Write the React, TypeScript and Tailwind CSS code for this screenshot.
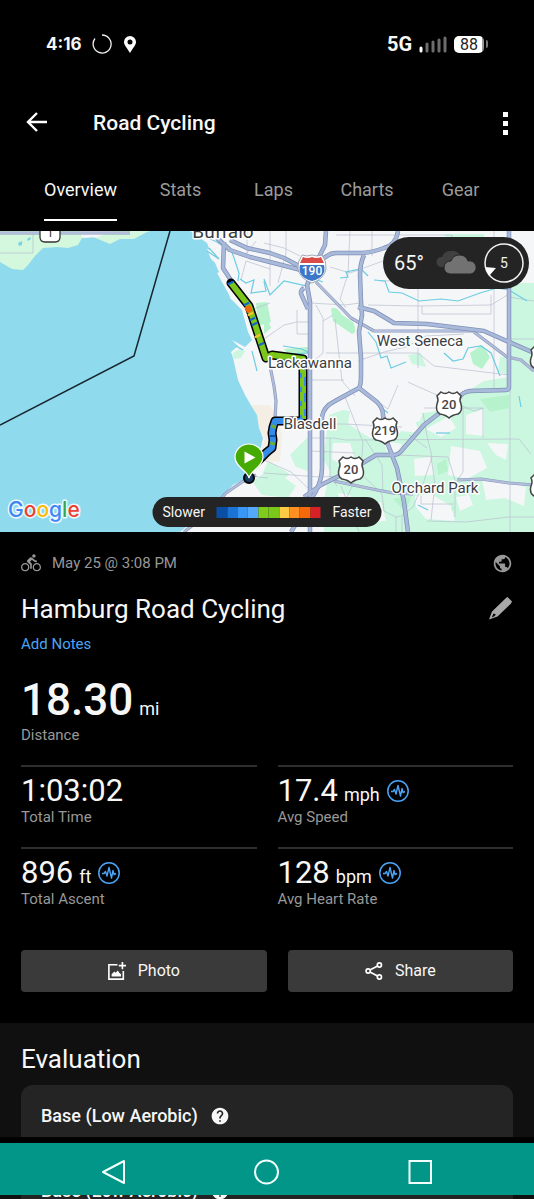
import React from "react";
import { MdDirectionsBike, MdPublic, MdHelp } from "react-icons/md";

const HIGHWAYS = [
  "M326 0 325 14 319 26 307 54 310 71V301",
  "M304 57Q299 60 302 65L308 78",
  "M217 7 230 19 250 26 270 31 301 39",
  "M230 9 247 17 270 22 284 27 301 36",
  "M224 11 223 37 232 51",
  "M319 30 327 25Q331 22 336 22H362Q374 21 384 17 396 14 398 0",
  "M364 24Q360 33 360 44L361 71 362 84 359 101 361 127V144Q361 154 359 157L335 170Q323 176 322 186V237Q322 248 316 260L291 301",
  "M359 157 377 171Q383 177 383 184L387 211 397 237 404 271 408 301",
  "M509 0V156Q509 159 506 159L470 160Q462 161 459 167L424 194 403 218Q399 224 393 224H376L351 239 321 254 304 266",
  "M358 76 374 80 394 92 427 93 484 100 534 122",
];

const SECONDARY = [
  "M0 2H130",
  "M270 135 274 155 276 170 275 188",
  "M256 244 242 251 226 262 207 283 184 301",
  "M316 51 351 87 374 100H477",
  "M474 101 507 126 521 129 534 140",
  "M334 250 377 259 393 262 413 263",
  "M457 249 481 248 509 252 534 254",
];

const STREETS = [
  "M0 22H33V2", "M247 0V24", "M241 49 246 30 270 38", "M270 0V55", "M256 10 247 22",
  "M286 0V22L278 52", "M264 12 284 17 300 25", "M350 0 348 43 340 68 346 77", "M372 0V25",
  "M336 4H452V43L421 57", "M418 54V137", "M368 74 418 75 491 74 509 63", "M422 75V83H491V64",
  "M330 36 350 42 394 26 452 24 509 16", "M310 72 345 74 360 72", "M297 79V103H308",
  "M264 108 284 94 297 91H310", "M316 74 323 87V122L310 133", "M323 90 333 84", "M326 122H418L434 135 509 144",
  "M358 130 384 121 406 116 426 105 464 103", "M335 88 338 115 342 150 355 165",
  "M310 149H344", "M345 166 363 211 361 237 347 266", "M398 154 388 178 378 171", "M408 151 421 157 474 180 483 177",
  "M494 0V159", "M510 0V301", "M310 207H333L346 209 519 208 531 223", "M330 207V245L337 255",
  "M355 237 382 263 384 280 396 286 401 285 413 276 424 250 432 226 427 205 423 182",
  "M365 208 382 234 383 260", "M397 224 448 226 455 249V286", "M421 265V273H454", "M431 226 435 253 431 289",
  "M463 177V241L456 251", "M483 177V207", "M424 177H483", "M427 290 466 291 509 286H534",
  "M396 286V301", "M402 285V301", "M310 193H345L402 196", "M264 229 291 241 310 259", "M264 242 320 246 344 245",
  "M341 255 348 272 359 301", "M509 108H534", "M509 66 534 70", "M380 50 452 48 509 40",
  "M310 220 355 222", "M409 204 427 217", "M251 79 270 72", "M250 245 268 247",
];

const CREEKS = [
  "M208 7C222 12 223 16 232 21L239 42 238 50", "M240 48 246 52 254 49 251 62 266 60 264 50",
  "M207 20 219 28 209 17", "M252 120 257 140", "M236 115 243 119",
  "M264 48 270 64 284 50 307 55 314 48 323 51", "M340 47 348 46 346 41 361 38 368 45",
  "M374 49 385 50 389 61 402 62 419 70 441 68 458 70 480 62 497 57 509 59 527 70",
  "M368 101 376 111 381 127 387 125 391 137 406 131", "M444 122 453 130 463 128 468 117 481 115 491 122 500 145",
  "M283 115 302 118 309 122 285 123", "M383 178 388 182", "M436 202H450", "M519 165 521 176", "M418 274 428 279",
];

function Shield({ x, y, label }: { x: number; y: number; label: string }) {
  return (
    <g transform={`translate(${x} ${y})`}>
      <path
        d="M-8-12Q-4-9 0-12 4-9 8-12L12-8Q10-4 12 0 14 7 9 10 3 11 0 14-3 11-9 10-14 7-12 0-10-4-12-8Z"
        fill="#fff"
        stroke="#444"
        strokeWidth="1.5"
      />
      <text y="5" textAnchor="middle" fontSize="13" fontWeight="500" fill="#444">
        {label}
      </text>
    </g>
  );
}

const PLACES = [
  { x: 223, y: 7, size: 19, name: "Buffalo" },
  { x: 310, y: 137, size: 15, name: "Lackawanna" },
  { x: 420, y: 115, size: 15, name: "West Seneca" },
  { x: 310, y: 198, size: 15, name: "Blasdell" },
  { x: 435, y: 262, size: 15, name: "Orchard Park" },
];

const ROUTE_NORTH = "M231 52 249 75 266 127 272 124 303 128V188";
const ROUTE_SOUTH = "M303 188 300 190 275 190 273 196 272 202 273 209 272 217 267 221 262 226 253 235";

function RouteMap() {
  return (
    <svg
      viewBox="0 0 534 301"
      preserveAspectRatio="xMidYMid slice"
      className="block h-[301px] w-full font-['Roboto',sans-serif]"
      role="img"
      aria-label="Route map"
    >
      <rect width="534" height="301" fill="#f5f6f8" />
      <g fill="#cbf7e0">
        <path d="M508 52H534V301H324V268L330 240 323 228 329 184 343 179 350 180 348 193 370 207 396 207 401 200 420 202 410 178 424 182 436 180 460 165 484 150 509 146Z" />
        <path d="M443 3H485L480 10H450ZM408 124 421 122 426 136 412 133ZM500 126H509V145L498 140Z" />
        <path d="M268 230 290 243 285 247 296 255 288 267 262 264 252 250 262 244ZM290 224 308 206V240L296 236Z" />
      </g>
      <g fill="#b6f2cb">
        <path d="M331 78Q336 74 342 84L353 91Q358 102 352 103L333 90ZM470 122 482 114 490 126 482 138 473 133ZM264 77 271 97 264 103ZM256 72 267 71 271 91 258 95ZM284 118 308 116V122L292 128Z" />
        <path d="M480 168 509 164V177L490 181ZM437 233 446 228 448 240 438 244ZM424 280 455 276 448 288 431 287ZM393 268 411 265 406 281Z" />
      </g>
      <g fill="#f5f6f8">
        <path d="M397 178 424 178 420 190 396 197ZM426 198 449 185 456 197 441 206ZM333 212 350 212 354 225 343 235 332 228ZM383 210 402 213 397 223 387 221ZM451 215 480 220 487 237 467 248 448 244ZM414 228 431 226 434 244 415 245ZM482 248 509 252 526 256 524 275 505 267 486 269ZM415 265 431 263 451 275 455 290 426 288 416 276ZM338 262 350 264 355 278 344 285ZM363 276 381 271 386 290 365 291ZM466 184 484 178 484 205 466 203ZM456 266 469 264 473 274 460 280ZM487 212 508 213 506 229 496 224Z" />
      </g>
      <path d="M251 174H269L277 184 282 205 280 230 268 232 260 224 265 207 259 197Z" fill="#f5eee4" />
      <path
        d="M0 0H190L207 12 218 39 228 54 230 67 242 79 248 101 252 109 245 116 232 109 238 115 231 121 233 127 238 149 245 164 252 176 257 184 259 197 263 207 261 216 256 235 243 249 233 254 223 264 200 284 180 301H0Z"
        fill="#90daed"
      />
      <path
        d="M0 0V31L12 38 23 39 28 34 35 25 43 17 57 16 68 17 78 14 82 7 93 6 110 13 120 8 134 8 145 2 150 0Z"
        fill="#d3f8de"
      />
      <path d="M80 0H112L98 6 82 7Z" fill="#f5f6f8" />
      <path d="M232 123 239 118 245 120 241 127 234 128Z" fill="#cdf6e1" />
      <path d="M207 18 217 21 226 35 220 36 211 28ZM217 42 222 40 230 50 236 68 232 69Z" fill="#f5f6f8" />
      <path d="M18 12 22 10 22 14 19 15ZM27 8 30 6 31 8 28 10Z" fill="#79d3e8" />
      <g fill="none" stroke="#b9bfd0" strokeOpacity=".7">
        {STREETS.map((d) => (
          <path key={d} d={d} />
        ))}
      </g>
      <g fill="none" stroke="#6ccce2" strokeWidth="1.2">
        {CREEKS.map((d) => (
          <path key={d} d={d} />
        ))}
      </g>
      <g fill="none" strokeLinejoin="round">
        {SECONDARY.map((d) => (
          <path key={d} d={d} stroke="#8c9abc" strokeWidth="3.2" />
        ))}
        {SECONDARY.map((d) => (
          <path key={d + "i"} d={d} stroke="#b2bedb" strokeWidth="1.8" />
        ))}
        {HIGHWAYS.map((d) => (
          <path key={d} d={d} stroke="#7f90b8" strokeWidth="4.5" />
        ))}
        {HIGHWAYS.map((d) => (
          <path key={d + "i"} d={d} stroke="#a9b9da" strokeWidth="3" />
        ))}
      </g>
      <path d="M170 0 134 125 0 194" fill="none" stroke="#17252f" strokeWidth="1.5" />

      <g fill="none" strokeLinejoin="round">
        <circle cx="249" cy="247" r="5" fill="#173c66" stroke="#000" strokeWidth="2" />
        <path d={ROUTE_NORTH} stroke="#000" strokeWidth="9" strokeLinecap="round" />
        <path d={ROUTE_SOUTH} stroke="#000" strokeWidth="9" />
        <path d={ROUTE_NORTH} stroke="#7bc51c" strokeWidth="6" />
        <path d={ROUTE_SOUTH} stroke="#348ce8" strokeWidth="6" />
        <path d="M305 130V185" stroke="#348ce8" strokeWidth="2" strokeDasharray="9 7" />
        <path d="M301 142V188" stroke="#348ce8" strokeWidth="2" strokeDasharray="5 9" />
        <path d="M247 75 250 81" stroke="#f26a0c" strokeWidth="6" />
        <path d="M250 82 251 84M257 104 258 106" stroke="#fcc133" strokeWidth="6" />
        <path d="M246 72 247 74M252 87 253 89M254 92 255 94M261 112 262 114M230 51 231 53" stroke="#1668c4" strokeWidth="6" />
        <path d="M274 194 273 197M273 211 272 214" stroke="#6bae35" strokeWidth="5" />
        <path d="M272 204V206" stroke="#0d529f" strokeWidth="6" />
      </g>

      <g transform="translate(312 37)">
        <path
          d="M-10-13Q-5-11 0-13 5-11 10-13 15-6 14 1 12 11 0 15-12 11-14 1-15-6-10-13Z"
          fill="#fff"
          stroke="#8b93a5"
          strokeWidth=".8"
        />
        <path d="M-9-11Q-5-9 0-11 5-9 9-11L12-5H-12Z" fill="#d94b46" />
        <path d="M-12-3H12Q15 9 0 13-15 9-12-3Z" fill="#3b78c8" />
        <text y="7" textAnchor="middle" fontSize="12" fontWeight="500" fill="#fff">190</text>
      </g>
      <Shield x={449} y={173} label="20" />
      <Shield x={385} y={199} label="219" />
      <Shield x={351} y={238} label="20" />
      <Shield x={543} y={127} label="" />
      <Shield x={543} y={255} label="" />
      <g>
        <path d="M40-6H60V6Q60 11 55 11H45Q40 11 40 6Z" fill="#fff" stroke="#333" strokeWidth="1.3" />
        <text x="50" y="6" textAnchor="middle" fontSize="12" fill="#333">1</text>
      </g>
      {PLACES.map((p) => (
        <text
          key={p.name}
          x={p.x}
          y={p.y}
          textAnchor="middle"
          fontSize={p.size}
          fill="#3a3d42"
          stroke="#fff"
          strokeWidth="3"
          strokeLinejoin="round"
          paintOrder="stroke"
        >
          {p.name}
        </text>
      ))}

      <path d="M249 247C247 239 235 236 235 226A14 13 0 0 1 263 226C263 236 251 239 249 247Z" fill="#45ab03" stroke="#fff" strokeWidth="1.2" />
      <path d="M244.500 220.500 255.500 226.500 244.500 232.500Z" fill="#fff" />

      <text x="8" y="286" fontFamily="Inter" fontSize="21" fontWeight="500" stroke="#fff" strokeOpacity=".85" strokeWidth="3" strokeLinejoin="round" paintOrder="stroke">
        <tspan fill="#4285f4">G</tspan>
        <tspan fill="#ea4335">o</tspan>
        <tspan fill="#fbbc05">o</tspan>
        <tspan fill="#4285f4">g</tspan>
        <tspan fill="#34a853">l</tspan>
        <tspan fill="#ea4335">e</tspan>
      </text>
    </svg>
  );
}

function PulseIcon() {
  return (
    <svg viewBox="0 0 24 24" className="size-6 self-center" fill="none" stroke="#4ba3f5" aria-hidden="true">
      <circle cx="12" cy="12" r="10.200" strokeWidth="1.500" />
      <path d="M5 12.500H7L8.500 10.500 10 15 12 6.500 14.500 17 16 9.500 17 13.500 19 12.500" strokeWidth="1.400" strokeLinejoin="round" />
    </svg>
  );
}

function Stat({ value, unit, label, pulse }: { value: string; unit?: string; label: string; pulse?: boolean }) {
  return (
    <div className="h-[82px] border-t-2 border-[#2e2e2e] pt-2">
      <div className="flex h-8 items-baseline gap-1.5">
        <span className="text-[31px] leading-8">{value}</span>
        {unit && <span className="text-lg leading-8">{unit}</span>}
        {pulse && <PulseIcon />}
      </div>
      <div className="text-[15px] leading-5 text-[#989898]">{label}</div>
    </div>
  );
}

const LEGEND = [
  "bg-[#0b4fa5]", "bg-[#1b74d4]", "bg-[#3a96f5]", "bg-[#55a9fb]", "bg-[#7fcc1c]",
  "bg-[#7bc81b]", "bg-[#ffcb45]", "bg-[#ff8f22]", "bg-[#f4690b]", "bg-[#d92026]",
];

const TABS = ["Overview", "Stats", "Laps", "Charts", "Gear"];

function BenefitLabel() {
  return (
    <div className="flex h-6 items-center gap-3 text-lg font-medium">
      Base (Low Aerobic)
      <MdHelp className="size-5" aria-hidden="true" />
    </div>
  );
}

export default function App() {
  return (
    <div className="relative w-full overflow-hidden bg-black font-['Roboto',sans-serif] text-[#f7f7f7]">
      <div className="flex h-[88px] items-center justify-between px-[46px]">
        <div className="flex items-center gap-[10px]">
          <span className="font-['Inter',sans-serif] text-[17px] leading-6 font-bold">4:16</span>
          <svg viewBox="0 0 20 20" className="size-5" fill="none" stroke="#eee" strokeWidth="1.300" aria-hidden="true">
            <path d="M10 1A9 9 0 1 1 3 4.500" />
          </svg>
          <svg viewBox="0 0 12 17" className="ml-0.5 h-[17px] w-3" fill="#fff" aria-hidden="true">
            <path fillRule="evenodd" d="M6 0A6 6 0 0 0 0 6C0 9 3 12 6 17 9 12 12 9 12 6A6 6 0 0 0 6 0ZM6 3.500A2.500 2.500 0 1 1 6 8.500 2.500 2.500 0 0 1 6 3.500Z" />
          </svg>
        </div>
        <div className="flex items-center gap-[7px]">
          <span className="text-xl leading-6 font-bold">5G</span>
          <svg viewBox="0 0 28 17" className="h-[17px] w-7" strokeWidth="3" strokeLinecap="round" aria-hidden="true">
            <path d="M2 12V15" stroke="#fff" />
            <path d="M8 8V15M14 6V15M20 4V15M26 2V15" stroke="#6d6d6d" />
          </svg>
          <div className="flex items-center gap-0.5">
            <span className="rounded-[5px] bg-[linear-gradient(90deg,#fff_92%,#999_92%)] px-1.5 text-base leading-[17px] text-[#222]">88</span>
            <span className="h-2 w-0.5 rounded-r bg-[#777]" />
          </div>
        </div>
      </div>

      <header className="flex h-[70px] items-center px-[26px]">
        <button aria-label="Back">
          <svg viewBox="0 0 22 22" className="size-[22px]" fill="none" stroke="#fff" strokeWidth="2.400" aria-hidden="true">
            <path d="M21 10H2M11 1 2 10 11 19" />
          </svg>
        </button>
        <h1 className="ml-[45px] text-[21px] leading-7 font-medium">Road Cycling</h1>
        <button aria-label="More options" className="ml-auto flex w-[5px] flex-col items-center gap-1">
          <span className="size-[5px] bg-white" />
          <span className="size-[5px] bg-white" />
          <span className="size-[5px] bg-white" />
        </button>
      </header>

      <nav className="grid h-[73px] grid-cols-[107fr_93fr_93fr_94fr_93fr] items-start px-[27px] pt-[18px] text-lg leading-7 text-[#9a9a9a]">
        {TABS.map((t, i) => (
          <button
            key={t}
            aria-current={i === 0 ? "page" : undefined}
            className={
              i === 0
                ? "justify-self-center border-b-2 border-white pb-[15px] text-[#f7f7f7]"
                : "justify-self-center"
            }
          >
            {t}
          </button>
        ))}
      </nav>

      <section className="relative">
        <RouteMap />
        <div className="absolute top-[6px] right-[5px] flex h-[52px] items-center gap-[7px] rounded-full bg-[#242424] pr-[5px] pl-[11px]">
          <span className="text-xl leading-7">65°</span>
          <svg viewBox="0 0 42 24" className="ml-1 h-6 w-[42px]" aria-hidden="true">
            <path d="M6 16A5 5 0 0 1 7 6 10 9 0 0 1 26 6V16Z" fill="#404040" />
            <path d="M15 23A6 6 0 0 1 16 10 9 9 0 0 1 33 10 6.500 6.500 0 0 1 36 23Z" fill="#727272" stroke="#242424" />
          </svg>
          <svg viewBox="0 0 40 40" className="size-10" aria-hidden="true">
            <circle cx="20" cy="20" r="19" fill="none" stroke="#f2f2f2" strokeWidth="1.500" />
            <path d="M1 24 12 25 5 33Z" fill="#fff" />
            <text x="20" y="25" textAnchor="middle" fontSize="14" fill="#f2f2f2">5</text>
          </svg>
        </div>
        <div className="absolute bottom-[5px] left-1/2 flex h-[30px] w-[229px] -translate-x-1/2 items-center justify-between rounded-full bg-[#242424] px-[10px] text-sm">
          <span>Slower</span>
          <div className="flex h-[11px] w-[104px]">
            {LEGEND.map((c) => (
              <span key={c} className={`flex-1 ${c}`} />
            ))}
          </div>
          <span>Faster</span>
        </div>
      </section>

      <section className="px-[21px] pt-[19px]">
        <div className="flex h-6 items-center text-[15px] text-[#989898]">
          <MdDirectionsBike className="size-5" aria-hidden="true" />
          <span className="ml-[11px]">May 25 @ 3:08 PM</span>
          <MdPublic className="ml-auto size-[21px]" aria-hidden="true" />
        </div>
        <div className="mt-4 flex h-9 items-center justify-between">
          <h2 className="text-[26px] leading-9">Hamburg Road Cycling</h2>
          <button aria-label="Edit name">
            <svg viewBox="0 0 24 24" className="size-6" fill="#a8a8a8" aria-hidden="true">
              <path fillRule="evenodd" d="M17 1 18.500 0 23 4.500 22 6.500 8.500 19.500 0 22.500 3 14.500ZM4.500 16.500 2.800 20.300 5 19.500 7 17.500Z" />
            </svg>
          </button>
        </div>
        <a href="#notes" className="mt-[5px] block w-fit text-[15px] leading-6 text-[#4ba3f5]">Add Notes</a>

        <div className="mt-5 flex h-[49px] items-baseline gap-1.5">
          <span className="text-[44px] leading-[48px] font-medium">18.30</span>
          <span className="text-lg">mi</span>
        </div>
        <div className="text-[15px] leading-5 text-[#989898]">Distance</div>

        <div className="mt-5 grid grid-cols-2 gap-x-[21px]">
          <Stat value="1:03:02" label="Total Time" />
          <Stat value="17.4" unit="mph" label="Avg Speed" pulse />
          <Stat value="896" unit="ft" label="Total Ascent" pulse />
          <Stat value="128" unit="bpm" label="Avg Heart Rate" pulse />
        </div>

        <div className="mt-[21px] flex gap-[21px] text-base">
          <button className="flex h-[42px] grow-[12] basis-0 items-center justify-center gap-3 rounded bg-[#3a3a3a]">
            <svg viewBox="0 0 20 20" className="size-[18px]" fill="none" stroke="#fff" strokeWidth="1.800" aria-hidden="true">
              <path d="M10.500 3H1V19H17V10M16 0V8M12 4H20" />
              <path d="M4 16V13.500L7 10.500 8.500 12 11 9.500 12.500 12 14.500 13.500V16Z" fill="#fff" stroke="none" />
            </svg>
            Photo
          </button>
          <button className="flex h-[42px] grow-[11] basis-0 items-center justify-center gap-3 rounded bg-[#3a3a3a]">
            <svg viewBox="0 0 20 20" className="size-[18px]" fill="none" stroke="#fff" strokeWidth="1.900" aria-hidden="true">
              <circle cx="3.500" cy="10" r="2.300" />
              <circle cx="16" cy="3.300" r="2.300" />
              <circle cx="16" cy="16.700" r="2.300" />
              <path d="M5.500 9 14 4.400M5.500 11 14 15.600" />
            </svg>
            Share
          </button>
        </div>
      </section>

      <section className="mt-[31px] bg-[#101010] px-[21px] pt-[18px]">
        <h2 className="text-[26px] leading-9">Evaluation</h2>
        <div className="mt-2 h-[52px] rounded-t-xl bg-[#242424] px-5 pt-[19px]">
          <BenefitLabel />
        </div>
      </section>

      <nav className="mt-1.5 flex h-[52px] items-center justify-around bg-[#019688] px-9 pt-[5px]" aria-label="System">
        <button aria-label="System back">
          <svg viewBox="0 0 26 26" className="size-[26px]" fill="none" stroke="#f4fffd" strokeWidth="2" strokeLinejoin="round" aria-hidden="true">
            <path d="M24 2V24L3 13Z" />
          </svg>
        </button>
        <button aria-label="Home">
          <svg viewBox="0 0 26 26" className="size-[26px]" fill="none" stroke="#f4fffd" strokeWidth="2" aria-hidden="true">
            <circle cx="12.500" cy="13" r="11.500" />
          </svg>
        </button>
        <button aria-label="Recent apps">
          <svg viewBox="0 0 26 26" className="size-[26px]" fill="none" stroke="#f4fffd" strokeWidth="2" aria-hidden="true">
            <path d="M1.500 2H23V24H1.500Z" />
          </svg>
        </button>
      </nav>

      <div className="flex h-1 items-end overflow-hidden bg-[#101010] px-[21px]" aria-hidden="true">
        <div className="h-5 grow bg-[#242424] px-5">
          <BenefitLabel />
        </div>
      </div>
    </div>
  );
}
